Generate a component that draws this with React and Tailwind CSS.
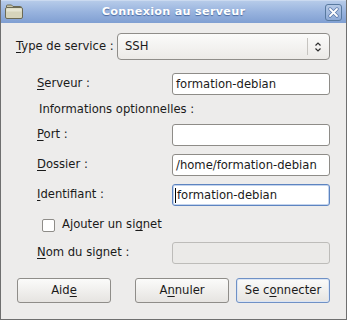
import React from "react";

const U = ({ children }) => <span className="underline underline-offset-2">{children}</span>;

const Field = ({ label, value = "", focused = false, disabled = false }) => (
  <div className="flex items-center h-[22px] pl-[36px]">
    <span className="text-[11.6px] text-[#1a1a1a]">{label}</span>
    <div
      className={
        "ml-auto w-[158px] h-[22px] rounded-[3px] border flex items-center pl-[2px] text-[11.6px] text-[#1a1a1a] " +
        (focused
          ? "border-[#5d84c0] bg-white shadow-[inset_0_0_0_1px_#c3d4ee]"
          : disabled
          ? "border-[#bdbcb9] bg-[#ebeae8]"
          : "border-[#8e8c88] bg-white")
      }
    >
      {value && (
        <span className={(focused ? "border-l border-black pl-px" : "pl-[1px]") + " leading-[15px]"}>
          {value}
        </span>
      )}
    </div>
  </div>
);

const Btn = ({ children, focused = false, className = "" }) => (
  <div
    className={
      "w-[94px] h-[25px] rounded-[3px] border flex items-center justify-center text-[11.6px] text-[#1a1a1a] bg-gradient-to-b from-[#fbfbfa] to-[#e6e4e1] " +
      (focused ? "border-[#6f91c6] shadow-[inset_0_0_0_1px_#dbe5f4]" : "border-[#8f8d89]") +
      " " +
      className
    }
  >
    {children}
  </div>
);

export default function App() {
  return (
    <div
      className="w-[347px] h-[320px] flex flex-col bg-[#edeceb] border-x border-b border-[#6f6f6f] overflow-hidden"
      style={{ fontFamily: '"DejaVu Sans", sans-serif' }}
    >
      {/* title bar */}
      <div className="relative h-[23px] shrink-0 flex items-center justify-center bg-gradient-to-b from-[#b6cbe9] via-[#98b3de] to-[#809fd2] border-t border-[#cbdaf0]">
        <svg className="absolute left-[4px] top-[3px]" width="18" height="15" viewBox="0 0 18 15">
          <path d="M1.5 3.5 V2 a1 1 0 0 1 1-1 h4 l1.5 1.5 h7.5 a1 1 0 0 1 1 1 V4" fill="#c9c7ad" stroke="#6b6a55" />
          <rect x="0.5" y="3.5" width="17" height="11" rx="1.5" fill="#d6d4bb" stroke="#6b6a55" />
          <rect x="1.5" y="4.5" width="15" height="3" fill="#e6e5d3" />
        </svg>
        <span
          className="text-[11.2px] font-bold text-white tracking-[0.3px]"
          style={{ textShadow: "0 1px 1px #4a6aa0" }}
        >
          Connexion au serveur
        </span>
        <div className="absolute right-[4px] top-[3px] w-[17px] h-[17px] rounded-[3px] border border-[#58799f] bg-gradient-to-b from-[#b5c9e6] to-[#8eaad6] flex items-center justify-center">
          <svg width="11" height="11" viewBox="0 0 11 11">
            <path d="M2 2 L9 9 M9 2 L2 9" stroke="#5a77a8" strokeWidth="3.2" strokeLinecap="round" />
            <path d="M2 2 L9 9 M9 2 L2 9" stroke="#ffffff" strokeWidth="1.8" strokeLinecap="round" />
          </svg>
        </div>
      </div>

      {/* body */}
      <div className="flex flex-col pr-[16px]">
        <div className="flex items-center h-[27px] mt-[10px] pl-[15px]">
          <span className="text-[11.6px] text-[#1a1a1a]">
            <U>T</U>ype de service :
          </span>
          <div className="ml-auto w-[213px] h-[27px] rounded-[4px] border border-[#8f8d89] bg-gradient-to-b from-[#fbfbfa] to-[#eceae7] flex items-center">
            <span className="pl-[7px] text-[11.6px] text-[#1a1a1a]">SSH</span>
            <div className="ml-auto h-[17px] border-l border-[#c6c4c0] w-[20px] flex items-center justify-center mr-[2px]">
              <svg width="8" height="12" viewBox="0 0 8 12">
                <path d="M1.5 4.5 L4 2 L6.5 4.5 M1.5 7.5 L4 10 L6.5 7.5" stroke="#2e2e2e" strokeWidth="1.2" fill="none" />
              </svg>
            </div>
          </div>
        </div>

        <div className="mt-[13px]">
          <Field label={<><U>S</U>erveur :</>} value="formation-debian" />
        </div>

        <div className="h-[22px] mt-[4px] pl-[38px] flex items-center text-[11.6px] text-[#1a1a1a]">
          Informations optionnelles :
        </div>

        <div className="mt-[3px]">
          <Field label={<><U>P</U>ort :</>} />
        </div>
        <div className="mt-[8px]">
          <Field label={<><U>D</U>ossier :</>} value="/home/formation-debian" />
        </div>
        <div className="mt-[8px]">
          <Field label={<><U>I</U>dentifiant :</>} value="formation-debian" focused />
        </div>

        <div className="flex items-center h-[14px] mt-[12px] pl-[41px]">
          <div className="w-[13px] h-[13px] rounded-[2px] border border-[#8e8c88] bg-white" />
          <span className="ml-[7px] text-[11.6px] text-[#1a1a1a]">
            Ajouter un si<U>g</U>net
          </span>
        </div>

        <div className="mt-[10px]">
          <Field label={<><U>N</U>om du signet :</>} disabled />
        </div>

        <div className="flex items-center mt-[14px] pl-[16px]">
          <Btn>
            Aid<U>e</U>
          </Btn>
          <Btn className="ml-auto">
            A<U>n</U>nuler
          </Btn>
          <Btn focused className="ml-[7px]">
            Se c<U>o</U>nnecter
          </Btn>
        </div>
      </div>
    </div>
  );
}
